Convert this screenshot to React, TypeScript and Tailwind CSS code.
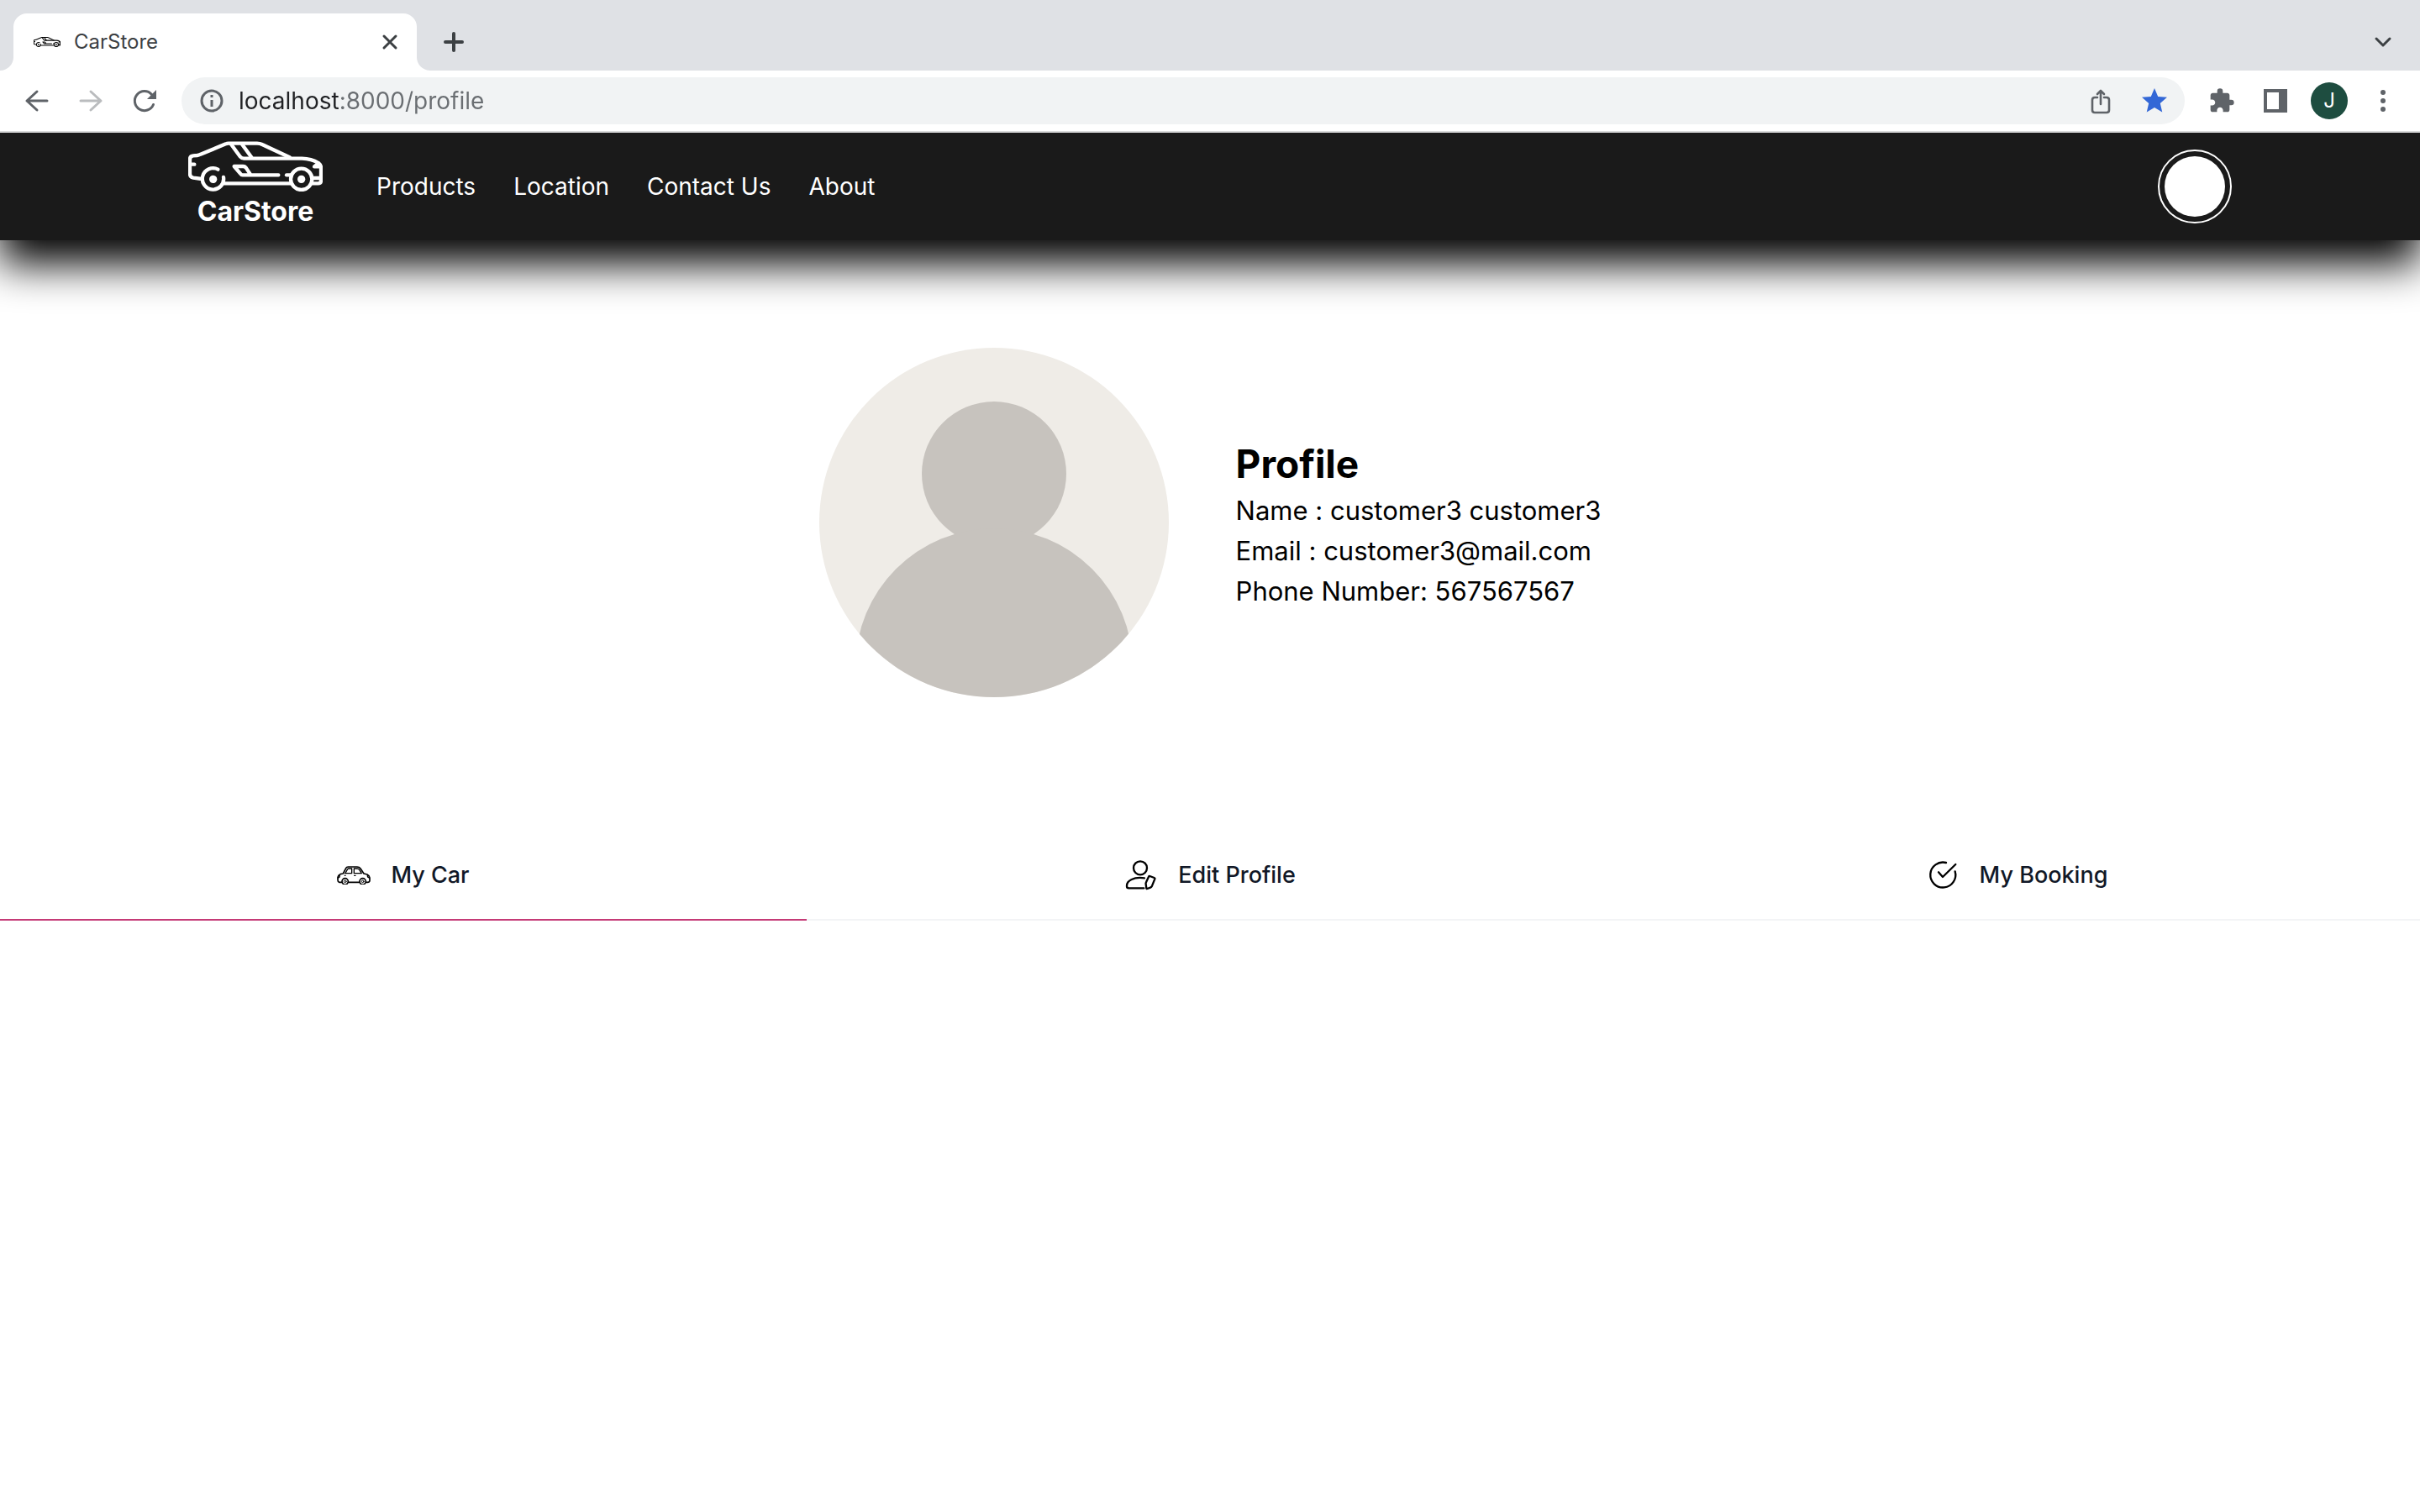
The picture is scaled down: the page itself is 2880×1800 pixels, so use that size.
import type { ReactNode } from "react";
import { MdExtension, MdStar } from "react-icons/md";

function SportsCar({ className, strokeWidth }: { className: string; strokeWidth: number }) {
  return (
    <svg
      viewBox="72 55 480 180"
      className={className}
      fill="none"
      stroke="currentColor"
      strokeWidth={strokeWidth}
      strokeLinecap="round"
      strokeLinejoin="round"
      aria-hidden="true"
    >
      <path d="M120 190L90 186Q78 183 78 172V120Q78 108 90 107L104 106Q110 105 116 102L206 65Q210 63 216 63H318Q328 63 336 67L434 113" />
      <path d="M224 65L258 111Q263 117 271 117H478Q512 118 537 133Q546 140 546 150V196Q546 206 536 206H516" />
      <path d="M264 66L298 113" />
      <path d="M80 138H94" />
      <path d="M545 146H522L532 138M545 187H520" />
      <path d="M178 156A38 38 0 1 0 198 184" />
      <circle cx="476" cy="191" r="38" />
      <circle cx="161" cy="191" r="14" fill="currentColor" stroke="none" />
      <circle cx="476" cy="191" r="14" fill="currentColor" stroke="none" />
      <path d="M200 206H438" />
      <path d="M394 176H266Q261 176 258 171L236 145H268Q274 145 278 150L294 174" />
      <path d="M423 176H438" />
    </svg>
  );
}

function CompactCar() {
  return (
    <svg viewBox="0 0 120 68" className="w-10" fill="none" stroke="currentColor" strokeWidth="5" strokeLinecap="round" strokeLinejoin="round" aria-hidden="true">
      <path d="M17 58H8Q3 56 3 50V40Q4 32 12 29L22 27L32 8Q34 3 40 3H72Q80 3 84 9L96 27L108 30Q116 34 117 42V52Q116 58 110 58H104" />
      <path d="M41 58H80" />
      <path d="M29 27L38 11Q39 9 42 9H53V26H32M61 9H72Q77 9 80 13L88 26H61Z" strokeWidth="4" />
      <path d="M28 34H30M62 34H66M4 42Q10 42 10 34M116 42Q109 42 109 34" strokeWidth="4" />
      <circle cx="29" cy="55" r="11" />
      <circle cx="29" cy="55" r="4" strokeWidth="3" />
      <circle cx="92" cy="55" r="11" />
      <circle cx="92" cy="55" r="4" strokeWidth="3" />
    </svg>
  );
}

function EditUser() {
  return (
    <svg viewBox="0 0 120 120" className="w-10" fill="none" stroke="currentColor" strokeWidth="7" strokeLinecap="round" strokeLinejoin="round" aria-hidden="true">
      <circle cx="57" cy="34" r="24" />
      <path d="M72 70Q44 66 26 75Q9 83 9 97V100Q9 106 16 106H70" />
      <path d="M91 63L107 69Q110 70 109 73L99 98Q97 102 93 104L82 108Q79 109 79 106L77 92Q76 89 78 85L87 65Q88 62 91 63Z" />
    </svg>
  );
}

function CheckRing() {
  return (
    <svg viewBox="0 0 120 120" className="w-10" fill="none" stroke="currentColor" strokeWidth="7" strokeLinecap="round" strokeLinejoin="round" aria-hidden="true">
      <path d="M72 15A45 45 0 1 0 104 46" />
      <path d="M45 49L60 66L106 21" />
    </svg>
  );
}

function IconButton({ label, children }: { label: string; children: ReactNode }) {
  return (
    <button type="button" aria-label={label} className="flex size-14 shrink-0 items-center justify-center rounded-full">
      {children}
    </button>
  );
}

function TabStrip() {
  return (
    <div className="flex h-[84px] items-end bg-[#dfe1e5] pr-4">
      <div className="size-4 bg-white">
        <div className="size-4 rounded-br-2xl bg-[#dfe1e5]" />
      </div>
      <div className="flex h-[68px] w-[480px] items-center rounded-t-2xl bg-white pr-5 pl-6">
        <SportsCar className="w-8 text-black" strokeWidth={16} />
        <span className="ml-4 flex-1 text-2xl text-[#3c4043]">CarStore</span>
        <button type="button" aria-label="Close tab" className="flex size-6 items-center justify-center text-[#3c4043]">
          <svg viewBox="0 0 24 24" className="size-6" fill="none" stroke="currentColor" strokeWidth="3" strokeLinecap="round" aria-hidden="true">
            <path d="M5 5L19 19M19 5L5 19" />
          </svg>
        </button>
      </div>
      <div className="size-4 bg-white">
        <div className="size-4 rounded-bl-2xl bg-[#dfe1e5]" />
      </div>
      <div className="flex h-[68px] flex-1 items-center justify-between">
        <button type="button" aria-label="New tab" className="flex size-14 items-center justify-center text-[#3c4043]">
          <svg viewBox="0 0 24 24" className="size-6" fill="none" stroke="currentColor" strokeWidth="4" strokeLinecap="round" aria-hidden="true">
            <path d="M12 2V22M2 12H22" />
          </svg>
        </button>
        <IconButton label="Search tabs">
          <svg viewBox="0 0 24 24" className="size-6 text-[#3c4043]" fill="none" stroke="currentColor" strokeWidth="3" strokeLinecap="round" strokeLinejoin="round" aria-hidden="true">
            <path d="M4 8L12 16L20 8" />
          </svg>
        </IconButton>
      </div>
    </div>
  );
}

function Toolbar() {
  return (
    <div className="relative z-20 flex h-[74px] items-center gap-2 border-b-2 border-[#d9dadb] bg-white px-4 text-[#5f6368]">
      <IconButton label="Back">
        <svg viewBox="0 0 32 32" className="size-8" fill="none" stroke="currentColor" strokeWidth="3" strokeLinecap="round" strokeLinejoin="round" aria-hidden="true">
          <path d="M16 5L4 16L16 27M4 16H28" />
        </svg>
      </IconButton>
      <IconButton label="Forward">
        <svg viewBox="0 0 32 32" className="size-8 text-[#babcbe]" fill="none" stroke="currentColor" strokeWidth="3" strokeLinecap="round" strokeLinejoin="round" aria-hidden="true">
          <path d="M16 5L28 16L16 27M28 16H4" />
        </svg>
      </IconButton>
      <IconButton label="Reload">
        <svg viewBox="0 0 32 32" className="size-8" fill="none" stroke="currentColor" strokeWidth="3" strokeLinecap="round" aria-hidden="true">
          <path d="M26.5 20.5A11.5 11.5 0 1 1 24.5 8.5" />
          <path d="M30 3V14H19Z" fill="currentColor" stroke="none" />
        </svg>
      </IconButton>
      <div className="mx-2 flex h-14 flex-1 items-center rounded-full bg-[#f1f3f4] pr-2 pl-5">
        <svg viewBox="0 0 32 32" className="size-8" fill="none" stroke="currentColor" strokeWidth="3" aria-hidden="true">
          <circle cx="16" cy="16" r="12" />
          <path d="M16 15V23M16 9V12" />
        </svg>
        <input
          type="text"
          aria-label="Address"
          defaultValue="localhost:8000/profile"
          className="ml-4 h-10 min-w-0 flex-1 bg-[linear-gradient(to_right,#202124_120px,#6a6e72_120px)] bg-clip-text text-[28px] text-transparent caret-black outline-none"
        />
        <div className="flex gap-2">
          <IconButton label="Share">
            <svg viewBox="0 0 32 32" className="size-8" fill="none" stroke="currentColor" strokeWidth="2.6" strokeLinecap="round" strokeLinejoin="round" aria-hidden="true">
              <path d="M12 12H9Q6 12 6 15V27Q6 30 9 30H23Q26 30 26 27V15Q26 12 23 12H20M16 20V4M12 8L16 4L20 8" />
            </svg>
          </IconButton>
          <IconButton label="Bookmark this page">
            <MdStar className="size-9 text-[#3367d6]" />
          </IconButton>
        </div>
      </div>
      <IconButton label="Extensions">
        <MdExtension className="size-8" />
      </IconButton>
      <IconButton label="Side panel">
        <svg viewBox="0 0 28 28" className="size-7" aria-hidden="true">
          <path d="M0 0H28V28H0ZM4 4V24H18V4Z" fill="currentColor" fillRule="evenodd" />
        </svg>
      </IconButton>
      <button type="button" aria-label="Browser profile" className="mx-1.5 flex size-11 items-center justify-center rounded-full bg-[#1e4d40] text-2xl text-white">
        J
      </button>
      <IconButton label="Browser menu">
        <svg viewBox="0 0 28 28" className="size-7" fill="currentColor" aria-hidden="true">
          <circle cx="14" cy="4" r="3" />
          <circle cx="14" cy="14" r="3" />
          <circle cx="14" cy="24" r="3" />
        </svg>
      </IconButton>
    </div>
  );
}

const links = ["Products", "Location", "Contact Us", "About"];

function SiteHeader() {
  return (
    <header className="relative z-10 flex h-32 items-center bg-[#1a1a1a] px-56 text-white shadow-[0_28px_50px_#000]">
      <a href="#home" className="flex w-40 flex-col items-center gap-1 pb-1">
        <SportsCar className="w-40" strokeWidth={13} />
        <span className="text-[32px] leading-10 font-bold">CarStore</span>
      </a>
      <nav className="ml-16 flex gap-[45px] text-[28px] leading-10">
        {links.map((link) => (
          <a key={link} href={"#" + link.toLowerCase().replace(" ", "-")}>
            {link}
          </a>
        ))}
      </nav>
      <button type="button" aria-label="Account menu" className="ml-auto flex size-[88px] items-center justify-center rounded-full border-2 border-white">
        <span className="size-18 rounded-full bg-white" />
      </button>
    </header>
  );
}

function Avatar() {
  return (
    <svg viewBox="0 0 416 416" className="w-[416px] shrink-0 rounded-full" role="img" aria-label="Profile picture">
      <rect width="416" height="416" fill="#efece7" />
      <circle cx="208" cy="150" r="86" fill="#c7c3be" />
      <circle cx="208" cy="380" r="165" fill="#c7c3be" />
    </svg>
  );
}

function ProfileSummary() {
  return (
    <section className="flex items-center justify-center gap-20 pt-32 pb-40">
      <Avatar />
      <div className="pt-1 text-[31px] leading-[48px] text-black">
        <h1 className="text-[46px] leading-[64px] font-bold">Profile</h1>
        <p>Name : customer3 customer3</p>
        <p>Email : customer3@mail.com</p>
        <p>Phone Number: 567567567</p>
      </div>
    </section>
  );
}

function ProfileTabs() {
  const tabs = [
    { label: "My Car", icon: <CompactCar />, selected: true },
    { label: "Edit Profile", icon: <EditUser />, selected: false },
    { label: "My Booking", icon: <CheckRing />, selected: false },
  ];
  return (
    <div role="tablist" className="grid grid-cols-3">
      {tabs.map((tab) => (
        <button
          key={tab.label}
          type="button"
          role="tab"
          aria-selected={tab.selected}
          className={
            tab.selected
              ? "flex items-center justify-center gap-6 border-b-2 border-[#c53a76] py-8"
              : "flex items-center justify-center gap-6 border-b-2 border-[#f3f4f6] py-8"
          }
        >
          <span className="flex size-10 items-center text-black">{tab.icon}</span>
          <span className="text-[27px] leading-10 font-medium text-[#111827]">{tab.label}</span>
        </button>
      ))}
    </div>
  );
}

export default function App() {
  return (
    <div className="min-h-screen bg-white font-['Inter',sans-serif]">
      <TabStrip />
      <Toolbar />
      <SiteHeader />
      <main>
        <ProfileSummary />
        <ProfileTabs />
      </main>
    </div>
  );
}
